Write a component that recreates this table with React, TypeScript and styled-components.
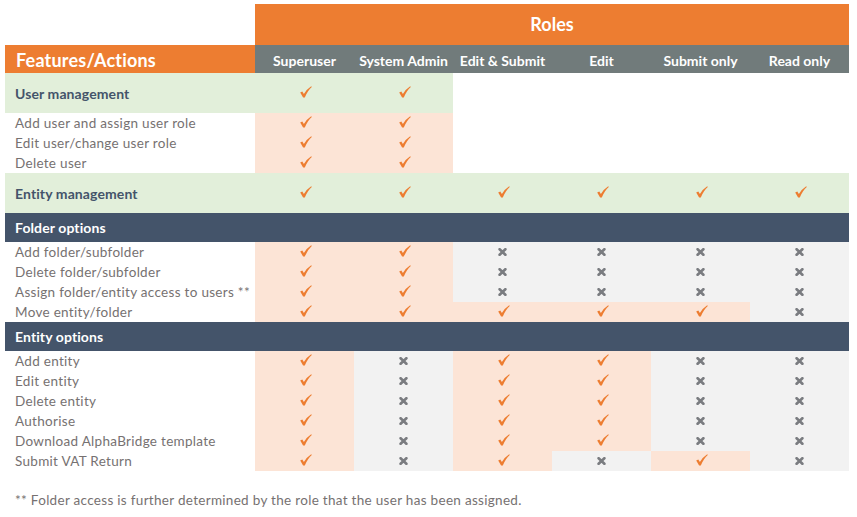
import React from "react";
import styled, { createGlobalStyle } from "styled-components";

const Global = createGlobalStyle`
  html, body { margin: 0; padding: 0; background: #ffffff; }
  body { font-family: Lato, "Open Sans", sans-serif; }
`;

const ORANGE = "#ED7D31";
const GREEN = "#E2EFDA";
const PINK = "#FCE4D6";
const GREY = "#F2F2F2";
const NAVY = "#44546A";
const HEADGREY = "#717B7B";
const TEXT = "#767171";

type Bg = "green" | "pink" | "grey" | "none";
const bgMap: Record<Bg, string> = { green: GREEN, pink: PINK, grey: GREY, none: "transparent" };

const Page = styled.div`
  padding: 4px 8px 0 5px;
  width: 844px;
`;

const Grid = styled.div<{ $h: number }>`
  display: grid;
  grid-template-columns: 250px repeat(6, 99px);
  height: ${(p) => p.$h}px;
`;

const Blank = styled.div``;

const RolesBar = styled.div`
  grid-column: 2 / span 6;
  background: ${ORANGE};
  color: #fff;
  font-weight: 700;
  font-size: 18px;
  display: flex;
  align-items: center;
  justify-content: center;
  padding-bottom: 2px;
`;

const FeatureHead = styled.div`
  background: ${ORANGE};
  color: #fff;
  font-weight: 700;
  font-size: 18px;
  letter-spacing: 0.2px;
  display: flex;
  align-items: center;
  padding-left: 11px;
  padding-top: 2px;
`;

const ColHead = styled.div`
  background: ${HEADGREY};
  color: #fff;
  font-weight: 700;
  font-size: 14px;
  display: flex;
  align-items: center;
  justify-content: center;
  padding-top: 2px;
  white-space: nowrap;
`;

const Label = styled.div<{ $bg: Bg; $bold?: boolean }>`
  background: ${(p) => bgMap[p.$bg]};
  color: ${(p) => (p.$bold ? NAVY : TEXT)};
  font-weight: ${(p) => (p.$bold ? 700 : 400)};
  font-size: ${(p) => (p.$bold ? 14 : 13.5)}px;
  letter-spacing: ${(p) => (p.$bold ? 0.1 : 0.3)}px;
  display: flex;
  align-items: center;
  padding-left: 10px;
  white-space: nowrap;
`;

const Cell = styled.div<{ $bg: Bg }>`
  background: ${(p) => bgMap[p.$bg]};
  display: flex;
  align-items: center;
  justify-content: center;
`;

const GroupBar = styled.div`
  grid-column: 1 / span 7;
  background: ${NAVY};
  color: #fff;
  font-weight: 700;
  font-size: 14px;
  letter-spacing: 0.1px;
  display: flex;
  align-items: center;
  padding-left: 10px;
`;

const Footer = styled.div`
  margin-top: 19px;
  height: 20px;
  line-height: 20px;
  color: ${TEXT};
  font-size: 13.5px;
  letter-spacing: 0.3px;
  padding-left: 10px;
`;

const Check = () => (
  <svg width="12" height="12" viewBox="0 0 12 12" style={{ marginLeft: 3, marginTop: -2 }}>
    <path d="M0.2 6.6 L2.3 5.4 L3.9 7.9 Q6.8 3.2 11.2 0.3 L11.8 1 Q7.6 4.6 4.8 11.5 L3.1 11.5 Z" fill={ORANGE} />
  </svg>
);

const Cross = () => (
  <svg width="9" height="8" viewBox="0 0 9 8">
    <path d="M1.6 1.2 L7.4 6.8 M7.4 1.2 L1.6 6.8" stroke="#7a7c80" strokeWidth="2.6" strokeLinecap="round" />
  </svg>
);

type V = "c" | "x" | "";
type CellDef = [V, Bg];

const C: CellDef = ["c", "pink"];
const X: CellDef = ["x", "grey"];
const E: CellDef = ["", "none"];

type RowDef =
  | { kind: "section"; label: string; cells: CellDef[]; labelBg: Bg }
  | { kind: "item"; label: string; cells: CellDef[] }
  | { kind: "group"; label: string };

const rows: RowDef[] = [
  { kind: "section", label: "User management", labelBg: "green", cells: [["c", "green"], ["c", "green"], E, E, E, E] },
  { kind: "item", label: "Add user and assign user role", cells: [C, C, E, E, E, E] },
  { kind: "item", label: "Edit user/change user role", cells: [C, C, E, E, E, E] },
  { kind: "item", label: "Delete user", cells: [C, C, E, E, E, E] },
  {
    kind: "section",
    label: "Entity management",
    labelBg: "green",
    cells: Array.from({ length: 6 }, () => ["c", "green"] as CellDef),
  },
  { kind: "group", label: "Folder options" },
  { kind: "item", label: "Add folder/subfolder", cells: [C, C, X, X, X, X] },
  { kind: "item", label: "Delete folder/subfolder", cells: [C, C, X, X, X, X] },
  { kind: "item", label: "Assign folder/entity access to users **", cells: [C, C, X, X, X, X] },
  { kind: "item", label: "Move entity/folder", cells: [C, C, C, C, C, X] },
  { kind: "group", label: "Entity options" },
  { kind: "item", label: "Add entity", cells: [C, X, C, C, X, X] },
  { kind: "item", label: "Edit entity", cells: [C, X, C, C, X, X] },
  { kind: "item", label: "Delete entity", cells: [C, X, C, C, X, X] },
  { kind: "item", label: "Authorise", cells: [C, X, C, C, X, X] },
  { kind: "item", label: "Download AlphaBridge template", cells: [C, X, C, C, X, X] },
  { kind: "item", label: "Submit VAT Return", cells: [C, X, C, X, C, X] },
];

const roles = ["Superuser", "System Admin", "Edit & Submit", "Edit", "Submit only", "Read only"];

const Mark = ({ v }: { v: V }) => (v === "c" ? <Check /> : v === "x" ? <Cross /> : null);

export default function App() {
  return (
    <>
      <Global />
      <Page>
        <Grid $h={41}>
          <Blank />
          <RolesBar>Roles</RolesBar>
        </Grid>
        <Grid $h={28}>
          <FeatureHead>Features/Actions</FeatureHead>
          {roles.map((r) => (
            <ColHead key={r}>{r}</ColHead>
          ))}
        </Grid>
        {rows.map((row, i) => {
          if (row.kind === "group") {
            return (
              <Grid $h={29} key={i}>
                <GroupBar>{row.label}</GroupBar>
              </Grid>
            );
          }
          const section = row.kind === "section";
          return (
            <Grid $h={section ? 40 : 20} key={i}>
              <Label $bg={section ? row.labelBg : "none"} $bold={section}>
                {row.label}
              </Label>
              {row.cells.map(([v, bg], j) => (
                <Cell $bg={bg} key={j}>
                  <Mark v={v} />
                </Cell>
              ))}
            </Grid>
          );
        })}
        <Footer>** Folder access is further determined by the role that the user has been assigned.</Footer>
      </Page>
    </>
  );
}
